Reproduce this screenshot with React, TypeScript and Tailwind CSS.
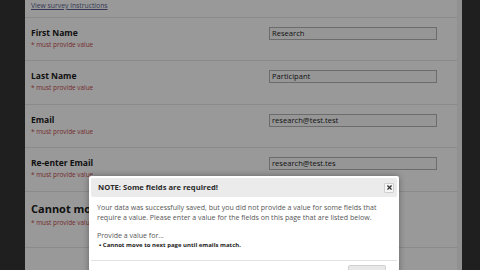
import { X } from "lucide-react";

const font = { fontFamily: '"Open Sans", "Liberation Sans", sans-serif' };

type Row = { label: string; value?: string; big?: boolean; h: string };

const rows: Row[] = [
  { label: "First Name", value: "Research", h: "h-[43px]" },
  { label: "Last Name", value: "Participant", h: "h-[44px]" },
  { label: "Email", value: "research@test.test", h: "h-[43px]" },
  { label: "Re-enter Email", value: "research@test.tes", h: "h-[44px]" },
  { label: "Cannot move to next page until emails match.", big: true, h: "h-[56px]" },
];

export default function App() {
  return (
    <div className="relative w-[480px] h-[270px] overflow-hidden bg-[#333333] flex" style={font}>
      <div className="w-[25px] shrink-0 bg-[#353535]" />
      <div className="w-[432px] shrink-0 bg-white flex flex-col">
        <div className="h-[18px] px-[6px] pt-[1px] border-b border-[#e6e6e6] text-[6.8px] leading-[10px]">
          <a className="text-[#5a5f8f] underline">View survey instructions</a>
        </div>
        {rows.map((r) => (
          <div key={r.label} className={`flex items-start border-b border-[#e6e6e6] px-[6px] pt-[9px] ${r.h}`}>
            <div className="flex-1 min-w-0">
              <div
                className={
                  r.big
                    ? "text-[11px] font-bold text-[#1a1a1a] leading-[15px] whitespace-nowrap"
                    : "text-[8.5px] font-bold text-[#1a1a1a] leading-[11px]"
                }
              >
                {r.label}
              </div>
              <div className="text-[6.4px] text-[#c44a4a] leading-[9px] mt-[2px]">* must provide value</div>
            </div>
            {r.value && (
              <div className="w-[168px] h-[13px] mr-[14px] border border-[#b4b4b4] bg-[#fbfbfb] px-[2px] text-[7.6px] text-[#222] leading-[11px]">
                {r.value}
              </div>
            )}
          </div>
        ))}
      </div>
      <div className="w-[5px] shrink-0 bg-[#f2f2f2]" />
      <div className="flex-1 bg-[#353535]" />

      {/* overlay */}
      <div className="absolute inset-0 bg-black/40" />

      {/* dialog */}
      <div className="absolute left-[89px] top-[176px] w-[310px] h-[110px] bg-white rounded-[2px] shadow-[0_0_6px_rgba(0,0,0,0.35)] p-[2px]">
        <div className="h-[19px] bg-[#ebebeb] rounded-[2px] flex items-center justify-between pl-[7px] pr-[3px]">
          <span className="text-[7.6px] font-bold text-[#2a2a2a]">NOTE: Some fields are required!</span>
          <span className="w-[10px] h-[10px] bg-[#f6f6f6] border border-[#cfcfcf] rounded-[1px] flex items-center justify-center">
            <X className="w-[7px] h-[7px] text-[#333]" strokeWidth={4} />
          </span>
        </div>
        <div className="px-[6px] pt-[5px] text-[7.05px] text-[#555] leading-[10px]">
          <p>Your data was successfully saved, but you did not provide a value for some fields that require a value. Please enter a value for the fields on this page that are listed below.</p>
          <p className="mt-[8px]">Provide a value for...</p>
          <p className="text-[6px] font-bold text-[#222] pl-[2px] leading-[9px] mt-[1px]">• Cannot move to next page until emails match.</p>
        </div>
        <div className="mt-[10px] border-t border-[#e3e3e3] flex justify-end pr-[11px] pt-[4px]">
          <span className="px-[9px] h-[14px] bg-[#e8e8e8] border border-[#d0d0d0] rounded-[2px] text-[7px] text-[#333] leading-[13px]">Close</span>
        </div>
      </div>
    </div>
  );
}
